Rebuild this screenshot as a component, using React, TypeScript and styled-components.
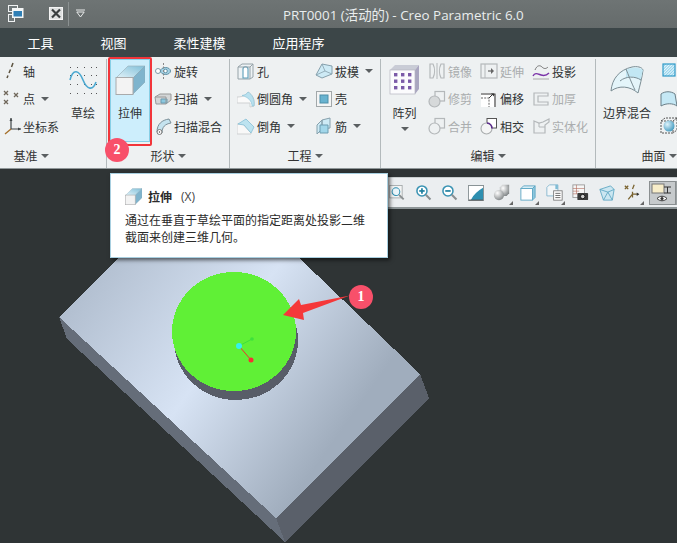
import React from 'react'
import styled, { createGlobalStyle } from 'styled-components'

const Global = createGlobalStyle`
  html, body { margin: 0; padding: 0; background: #2f3435; }
  body { font-family: "Noto Sans CJK SC", "Noto Sans", sans-serif; }
`

const Page = styled.div`
  position: relative;
  width: 677px;
  height: 543px;
  overflow: hidden;
  display: flex;
  flex-direction: column;
`
const TitleBar = styled.div`
  height: 28px;
  display: flex;
  align-items: center;
  background: linear-gradient(#6e7474, #656b6b);
  color: #e9eded;
`
const QuickIcon = styled.span<{ $left: number }>`
  display: flex;
  margin-left: ${p => p.$left}px;
`
const QuickDivider = styled.span`
  width: 1px;
  height: 24px;
  margin-left: 5px;
  background: #8b9191;
`
const Title = styled.span`
  margin-left: 198px;
  font-family: "Open Sans", "Noto Sans CJK SC", sans-serif;
  font-size: 13.4px;
  white-space: nowrap;
`
const TabBar = styled.div`
  height: 29px;
  display: flex;
  align-items: center;
  padding-left: 4px;
  background: #3c4648;
`
const Tab = styled.span`
  padding: 0 23.5px;
  font-size: 13px;
  color: #fff;
`
const Ribbon = styled.div`
  height: 110px;
  padding-top: 2px;
  display: flex;
  background: #eef1f2;
  border-bottom: 1px solid #8f9799;
`
const Group = styled.section<{ $width: number; $shift?: number; $last?: boolean }>`
  flex: none;
  box-sizing: border-box;
  width: ${p => p.$width}px;
  margin-left: ${p => p.$shift ?? 0}px;
  display: flex;
  flex-direction: column;
  border-right: ${p => (p.$last ? 'none' : '1px solid #b3babc')};
`
const GroupBody = styled.div<{ $pad?: number }>`
  height: 87px;
  display: flex;
  padding-left: ${p => p.$pad ?? 0}px;
`
const GroupLabel = styled.div`
  flex: 1;
  display: flex;
  align-items: center;
  justify-content: center;
  font-size: 12px;
  color: #333;
  padding-bottom: 2px;
`
const Column = styled.div<{ $width: number; $left?: number }>`
  width: ${p => p.$width}px;
  margin-left: ${p => p.$left ?? 0}px;
  flex: none;
`
const Row = styled.div<{ $off?: boolean }>`
  box-sizing: border-box;
  height: 27.5px;
  padding-bottom: 2px;
  display: flex;
  align-items: center;
  font-size: 12px;
  white-space: nowrap;
  color: ${p => (p.$off ? '#aaadae' : '#303334')};
`
const RowIcon = styled.span`
  flex: none;
  width: 18px;
  height: 18px;
  margin-right: 2px;
  display: flex;
`
const Caret = styled.i<{ $gap?: number }>`
  flex: none;
  margin-left: ${p => p.$gap ?? 6}px;
  border-left: 4px solid transparent;
  border-right: 4px solid transparent;
  border-top: 4px solid #5a5f61;
`
const Big = styled.div<{ $width: number }>`
  position: relative;
  flex: none;
  box-sizing: border-box;
  width: ${p => p.$width}px;
  display: flex;
  flex-direction: column;
  align-items: center;
  padding-top: 6px;
  font-size: 12px;
  color: #303334;
  white-space: nowrap;
`
const BigIcon = styled.span`
  height: 30px;
  margin-bottom: 9px;
  display: flex;
  align-items: center;
`
const BigCaret = styled(Caret)`
  margin: 6px 0 0;
`
const ExtrudeButton = styled(Big)`
  height: 83px;
  margin: 0 4px 0 3px;
  padding-top: 5px;
  background: #cdeefc;
  border: 1px solid #86cfe6;
`
const RedFrame = styled.div`
  position: absolute;
  left: -3px;
  top: -3px;
  width: 40px;
  height: 85px;
  border: 2px solid #f2353a;
  border-radius: 2px;
`
const Badge = styled.div`
  position: absolute;
  width: 24px;
  height: 24px;
  border-radius: 50%;
  background: #f8506a;
  color: #fff;
  font: bold 14px/24px "Liberation Serif", serif;
  text-align: center;
`
const RibbonBadge = styled(Badge)`
  left: -6px;
  top: 78px;
`
const CanvasBadge = styled(Badge)`
  left: 349px;
  top: 116px;
`
const Canvas = styled.div`
  position: relative;
  flex: 1;
  background: #2f3435;
`
const ViewBar = styled.div`
  position: absolute;
  left: 384px;
  right: 0;
  top: 8px;
  height: 32px;
  display: flex;
  align-items: center;
  background: #ebeef0;
  border-top: 1px solid #c9cecf;
  border-bottom: 2px solid #8d9597;
  box-sizing: border-box;
`
const ViewIcon = styled.span<{ $menu?: boolean; $active?: boolean }>`
  position: relative;
  flex: none;
  width: ${p => (p.$active ? 27 : 26.2)}px;
  height: 24px;
  margin-left: ${p => (p.$active ? 3 : 0)}px;
  display: flex;
  align-items: center;
  justify-content: center;
  box-sizing: border-box;
  ${p => p.$active && 'background: #c6cacc; border: 1px solid #8a8f91;'}
  ${p =>
    p.$menu &&
    `&::after { content: ''; position: absolute; right: 2px; bottom: 0;
      border-left: 4px solid transparent; border-bottom: 4px solid #666; }`}
`
const ViewEdge = styled.span`
  flex: none;
  width: 2px;
  height: 24px;
  background: #9aa0a2;
`
const Tooltip = styled.div`
  position: absolute;
  left: 110px;
  top: 173px;
  width: 278px;
  height: 85px;
  box-sizing: border-box;
  padding: 12px 14px 0;
  background: #fff;
  border: 1px solid #a8cfe0;
  box-shadow: 2px 2px 4px rgba(0, 0, 0, 0.6);
`
const TipHead = styled.div`
  display: flex;
  align-items: center;
  height: 20px;
  margin-bottom: 5px;
  font-size: 12px;
  color: #2b2b2b;
`
const TipName = styled.b`
  margin: 0 9px 0 6px;
`
const TipKey = styled.span`
  font-family: "Open Sans", sans-serif;
  color: #444;
`
const TipText = styled.p`
  margin: 0;
  width: 245px;
  font-size: 12px;
  line-height: 17px;
  color: #2b2b2b;
`
const ModelSvg = styled.svg`
  display: block;
`

const S = (p: { size?: number; box?: number; children: React.ReactNode }) => (
  <svg width={p.size ?? 18} height={p.size ?? 18} viewBox={`0 0 ${p.box ?? 18} ${p.box ?? 18}`}>
    {p.children}
  </svg>
)

const off = { fill: '#eef1f2', stroke: '#b4b8ba', strokeWidth: 1.2 }

const Cube = ({ size = 30, id = 'cubeTop' }: { size?: number; id?: string }) => (
  <svg width={size} height={size} viewBox="0 0 30 30">
    <defs>
      <linearGradient id={id} x1="0" y1="1" x2="1" y2="0">
        <stop offset="0" stopColor="#e4f3f9" />
        <stop offset="1" stopColor="#7fbfd8" />
      </linearGradient>
    </defs>
    <polygon points="1,13 13,1 30,1 18,13" fill={`url(#${id})`} stroke="#9db4bf" strokeWidth=".7" />
    <polygon points="18,13 30,1 30,17 18,29" fill="#7fb4cd" stroke="#8aa9b8" strokeWidth=".7" />
    <rect x="1" y="12.5" width="17" height="17" fill="#f3f3f3" stroke="#a9aaab" />
  </svg>
)

const icons: Record<string, React.ReactNode> = {
  axis: (
    <S>
      <path d="M10 1 L8.500 5 M7.500 7.500 L6 11 M5 13.500 L4 16" fill="none" stroke="#5c5340" strokeWidth="1.500" />
    </S>
  ),
  point: (
    <S>
      <path d="M1 1l4 4M5 1L1 5M11 3l4 4M15 3l-4 4M1 10l4 4M5 10l-4 4" stroke="#6f675a" strokeWidth="1.300" />
    </S>
  ),
  csys: (
    <S>
      <path d="M8 1v11h10" fill="none" stroke="#3f4547" strokeWidth="1.200" />
      <path d="M8 12L2 17" stroke="#a5702c" strokeWidth="1.400" />
      <path d="M6.500 4l1.500-3 1.500 3zM15 10.500l3 1.500-3 1.500z" fill="#3f4547" />
    </S>
  ),
  revolve: (
    <S>
      <circle cx="4" cy="9" r="2.500" fill="#fff" stroke="#7f9aa6" />
      <ellipse cx="11.500" cy="9" rx="5" ry="3.500" fill="#a6d3e6" stroke="#5f8fa3" />
      <circle cx="11.500" cy="9" r="1.800" fill="#fff" stroke="#5f8fa3" />
      <path d="M9.500 1v16" stroke="#888" strokeDasharray="2 1.500" />
    </S>
  ),
  sweep: (
    <S>
      <path d="M1 7l5-3h11v6l-5 4H2z" fill="#d3d6d7" stroke="#999" />
      <path d="M7 9h6v4H7z" fill="#8cc8df" stroke="#6a9bb0" />
      <path d="M1 7h11v7" fill="none" stroke="#999" />
    </S>
  ),
  sblend: (
    <S>
      <path d="M3 15C3 7 8 3 15 2l2 4C11 7 8 10 8 16z" fill="#c5e3ef" stroke="#7b8f98" />
      <circle cx="5.500" cy="15" r="2.500" fill="#fff" stroke="#777" />
      <circle cx="5.500" cy="15" r=".7" fill="#444" />
    </S>
  ),
  hole: (
    <S>
      <path d="M1 5l4-3h11v13l-3 2H1z" fill="#eef3f5" stroke="#96a3a9" />
      <path d="M6 16V7c0-3 5-3 5 0v9z" fill="#fff" stroke="#5c9db8" strokeWidth="1.100" />
      <path d="M13 5v12M1 5h12l3-3" fill="none" stroke="#96a3a9" />
    </S>
  ),
  round: (
    <S>
      <path d="M0 7c6 0 10-2 11-5 5 3 7 8 6 14l-4 1V13H0z" fill="#fafafa" stroke="#cfd2d3" />
      <path d="M5 5.500c3-.5 5-1.500 6-3.500 4 2 7 8 6 14h-2C15 11 11 7 5 5.500z" fill="#b9e1ef" stroke="#86bfd5" strokeWidth=".6" />
    </S>
  ),
  chamfer: (
    <S>
      <path d="M0 7h6l8 9v1H0z" fill="#f8f8f8" stroke="#cfd2d3" />
      <path d="M1 7l8-5 8 8-3 6-7-8z" fill="#bde3f0" stroke="#86bfd5" strokeWidth=".8" />
    </S>
  ),
  draft: (
    <S>
      <path d="M1 13L7 2l10 2v8L7 16z" fill="#cdeaf5" stroke="#86a0ac" />
      <path d="M7 2l3 7-9 4M10 9l7 3" fill="none" stroke="#86a0ac" strokeWidth=".8" />
    </S>
  ),
  shell: (
    <S>
      <rect x="1.500" y="1.500" width="15" height="15" fill="#f4f5f5" stroke="#a2a8aa" />
      <rect x="5" y="5" width="8" height="8" fill="#68b3d0" stroke="#4d8fa9" />
    </S>
  ),
  rib: (
    <S>
      <path d="M2 8l5-5v9l-5 5zM7 3l8-2v10l-8 1z" fill="#cdeaf5" stroke="#86a0ac" />
      <path d="M5 8h8v8H5z" fill="#a2d7ea" stroke="#6d9db1" />
    </S>
  ),
  mirror: (
    <S>
      <path d="M2 2h3c2 4 2 10 0 14H2zM16 2h-3c-2 4-2 10 0 14h3z" {...off} />
      <path d="M9 1v16" stroke="#b4b8ba" />
    </S>
  ),
  trim: (
    <S>
      <rect x="7" y="1.500" width="9.500" height="9.500" {...off} />
      <circle cx="6.500" cy="11.500" r="5.500" fill="#d6d9da" stroke="#b4b8ba" strokeWidth="1.200" />
    </S>
  ),
  merge: (
    <S>
      <rect x="7" y="1.500" width="9.500" height="9.500" {...off} />
      <circle cx="6.500" cy="11.500" r="5.500" {...off} />
    </S>
  ),
  extend: (
    <S>
      <rect x="1" y="2" width="16" height="14" {...off} />
      <path d="M5 2v14" stroke="#b4b8ba" />
      <path d="M8 9h4" stroke="#777" strokeWidth="1.400" />
      <path d="M11 6l3 3-3 3z" fill="#666" />
    </S>
  ),
  offset: (
    <S>
      <path d="M1 3h15v14H1z" fill="#fff" stroke="none" />
      <path d="M1 4h14v13" fill="none" stroke="#333" strokeWidth="1.100" />
      <path d="M1 8h8v9" fill="none" stroke="#666" strokeDasharray="2 1.200" />
      <path d="M9 8l4-4" stroke="#333" />
      <path d="M11 3.500h3v3z" fill="#333" />
    </S>
  ),
  intersect: (
    <S>
      <rect x="7" y="1.500" width="9.500" height="9.500" fill="#fff" stroke="#555" />
      <circle cx="6.500" cy="11.500" r="5.500" fill="#f4f5f5" stroke="#a9adae" strokeWidth="1.100" />
      <path d="M7 6a5.500 5.500 0 0 1 5 5.500" fill="none" stroke="#5a2a8c" strokeWidth="1.700" />
    </S>
  ),
  project: (
    <S>
      <path d="M1 14c2-4 5-2 8-1s5 1 8-2" fill="none" stroke="#7a32a8" strokeWidth="1.400" />
      <path d="M3 8c2-5 5-5 7-3s4 2 6 0" fill="none" stroke="#777" />
      <path d="M1 17h16" stroke="#aaa" />
    </S>
  ),
  thicken: (
    <S>
      <path d="M2 3h14v3H6v6h10v3H2z" {...off} />
    </S>
  ),
  solidify: (
    <S>
      <path d="M2 4l5 2 4-1 6-3v3l-4 3v8H2z" {...off} />
      <path d="M7 6v4h6" fill="none" stroke="#b4b8ba" />
    </S>
  ),
  hatch: (
    <S>
      <defs>
        <pattern id="hatch" width="2" height="2" patternUnits="userSpaceOnUse" patternTransform="rotate(45)">
          <rect width="2" height="2" fill="#8ed0ea" />
          <rect width="1" height="2" fill="#e9f7fc" />
        </pattern>
      </defs>
      <rect x="3" y="2" width="12" height="12" fill="url(#hatch)" stroke="#2f9ac8" strokeWidth="1.200" />
    </S>
  ),
  surface: (
    <S>
      <path d="M1 4c4-3 10-3 14 0l2 12c-4-3-11-3-16 0z" fill="#c5e8f5" stroke="#6b7f88" />
    </S>
  ),
  sphere: (
    <S>
      <defs>
        <radialGradient id="ball" cx=".35" cy=".35" r=".8">
          <stop offset="0" stopColor="#dff3fb" />
          <stop offset="1" stopColor="#2f8fb8" />
        </radialGradient>
      </defs>
      <rect x="1" y="4" width="12" height="12" fill="none" stroke="#555" strokeDasharray="2 1" />
      <path d="M1 4l4-3h12v12l-4 3M13 4l4-3" fill="none" stroke="#555" strokeDasharray="2 1" />
      <circle cx="9" cy="9" r="5.500" fill="url(#ball)" />
    </S>
  ),
}

const Sketch = () => (
  <svg width="28" height="28" viewBox="0 0 28 28">
    {[1, 8, 15, 22, 27].flatMap(x =>
      [1, 9, 18, 27].map(y => <rect key={`${x}-${y}`} x={x} y={y} width="1" height="1" fill="#555" />)
    )}
    <path d="M1 14C4 2 10 4 14 14s10 11 13 2" fill="none" stroke="#4ba8d0" strokeWidth="1.600" />
  </svg>
)

const PatternIcon = () => (
  <svg width="31" height="31" viewBox="0 0 31 31">
    <polygon points="1,6 6,1 30,1 26,6" fill="#c9ccd6" />
    <polygon points="26,6 30,1 30,25 26,30" fill="#a9a6c0" />
    <rect x="1" y="6" width="25" height="24" fill="#fbfbfd" stroke="#b5b6c0" strokeWidth=".7" />
    {[10, 16.5, 23].flatMap(y =>
      [5, 12, 19].map(x => <rect key={`${x}-${y}`} x={x} y={y - 1} width="3.400" height="3.400" fill="#7b5aa8" />)
    )}
  </svg>
)

const BlendIcon = () => (
  <svg width="34" height="28" viewBox="0 0 34 28">
    <path d="M1 25C2 13 9 4 22 1c5-1 10 0 11 3-1 8-3 15-5 23C20 20 9 19 1 25z" fill="#e4f5fa" stroke="#7b8d94" />
    <path d="M16 4c6-3 13-3 17 0-1 4-2 7-2 10-6-4-11-4-15-2z" fill="#c2e7f3" />
    <path d="M16 3c2 5 6 15 9 21M10 15C16 10 25 10 31 14" fill="none" stroke="#7b8d94" />
  </svg>
)

const WindowIcon = () => (
  <svg width="16" height="17" viewBox="0 0 16 17">
    <rect x=".5" y=".5" width="9" height="6" fill="#70787a" stroke="#f0f2f2" />
    <rect x=".5" y="9.500" width="6" height="7" fill="#70787a" stroke="#f0f2f2" />
    <rect x="4" y="3" width="11.500" height="10" fill="#f4f6f6" />
    <rect x="5.500" y="6" width="8.500" height="5.500" fill="#2f7fb5" />
  </svg>
)

const CloseIcon = () => (
  <svg width="14" height="13" viewBox="0 0 14 13">
    <rect x=".5" y=".5" width="13" height="12" fill="#dfe1e1" stroke="#f4f4f4" />
    <path d="M3 2.500l8 8M11 2.500l-8 8" stroke="#3a3f40" strokeWidth="2.200" />
  </svg>
)

const DropIcon = () => (
  <svg width="9" height="9" viewBox="0 0 9 9">
    <path d="M0 1h9" stroke="#e8eaea" />
    <path d="M.8 3h7.400L4.500 8z" fill="none" stroke="#e8eaea" />
  </svg>
)

const Glass = ({ sign }: { sign: '+' | '-' }) => (
  <svg width="17" height="17" viewBox="0 0 22 22">
    <circle cx="9" cy="9" r="6.500" fill="#fff" stroke="#3a93b3" strokeWidth="2" />
    <path d="M14 14l6 6" stroke="#8a8f91" strokeWidth="2.600" />
    <path d="M5.500 9h7" stroke="#1f7f9f" strokeWidth="2.200" />
    {sign === '+' && <path d="M9 5.500v7" stroke="#1f7f9f" strokeWidth="2.200" />}
  </svg>
)

const ViewIcons: { key: string; menu?: boolean; active?: boolean; node: React.ReactNode }[] = [
  {
    key: 'fit',
    node: (
      <svg width="17" height="17" viewBox="0 0 22 22">
        <rect x="1" y="2" width="16" height="16" fill="#f4f5f5" stroke="#9aa0a2" />
        <circle cx="9" cy="10" r="5" fill="#eaf5fa" stroke="#2f8fb0" strokeWidth="1.300" />
        <path d="M13 14l6 6" stroke="#8a8f91" strokeWidth="2.400" />
      </svg>
    ),
  },
  { key: 'in', node: <Glass sign="+" /> },
  { key: 'out', node: <Glass sign="-" /> },
  {
    key: 'repaint',
    node: (
      <svg width="16" height="16" viewBox="0 0 17 17">
        <rect x=".5" y=".5" width="16" height="16" fill="#2e8fb0" stroke="#8a9193" />
        <path d="M1 1h15v2C11 6 6 10 3 16H1z" fill="#fff" />
        <path d="M1 16h15" stroke="#555" />
      </svg>
    ),
  },
  {
    key: 'shade',
    menu: true,
    node: (
      <svg width="17" height="17" viewBox="0 0 20 20">
        <defs>
          <radialGradient id="gray" cx=".35" cy=".3" r=".8">
            <stop offset="0" stopColor="#fff" />
            <stop offset="1" stopColor="#7a7f81" />
          </radialGradient>
        </defs>
        <path d="M8 4l3-3h8v10l-3 3H8z" fill="url(#gray)" />
        <circle cx="7" cy="13" r="6" fill="url(#gray)" />
      </svg>
    ),
  },
  {
    key: 'cube',
    menu: true,
    node: (
      <svg width="16" height="16" viewBox="0 0 18 18">
        <path d="M1 4l3-3h13l-3 3z" fill="#d8eef6" stroke="#5ba6c4" />
        <path d="M14 4l3-3v13l-3 3z" fill="#8ec7dd" stroke="#5ba6c4" />
        <rect x="1" y="4" width="13" height="13" fill="#fff" stroke="#5ba6c4" />
      </svg>
    ),
  },
  {
    key: 'saved',
    menu: true,
    node: (
      <svg width="17" height="17" viewBox="0 0 20 20">
        <path d="M1 4l3-3h10v13H1z" fill="#f2f6f8" stroke="#7fb4cc" />
        <path d="M11 1h3v5h-3z" fill="#7fbcd5" />
        <rect x="9" y="8" width="10" height="11" fill="#fff" stroke="#777" />
        <path d="M11 11h6M11 13.500h6M11 16h6" stroke="#555" />
      </svg>
    ),
  },
  {
    key: 'camera',
    node: (
      <svg width="17" height="17" viewBox="0 0 19 19">
        <rect x="1" y="1" width="13" height="14" fill="#f6f6f6" stroke="#999" />
        <path d="M1 5h13M1 8h7M1 11h5M5 1v10" stroke="#b36c5e" strokeWidth=".7" />
        <rect x="6" y="10" width="12" height="8" rx="1" fill="#3a3a3a" />
        <circle cx="12" cy="14" r="2.500" fill="#cfcfcf" stroke="#111" />
      </svg>
    ),
  },
  {
    key: 'wire',
    node: (
      <svg width="16" height="16" viewBox="0 0 18 18">
        <path d="M1 5l12-4 4 4-2 12H5z" fill="#cbe6f1" stroke="#5fa7c3" />
        <path d="M1 5l9 3 7-3M10 8l5 9M10 8L5 17" fill="none" stroke="#5fa7c3" />
      </svg>
    ),
  },
  {
    key: 'datum',
    menu: true,
    node: (
      <svg width="17" height="17" viewBox="0 0 20 20">
        <path d="M1 2l4 4M5 2L1 6M12 1l-2 5M10 9v7M10 12h7M10 12l-5 6" fill="none" stroke="#7a632f" strokeWidth="1.500" />
        <path d="M15 10l3 2-3 2z" fill="#333" />
      </svg>
    ),
  },
  {
    key: 'display',
    active: true,
    node: (
      <svg width="22" height="20" viewBox="0 0 22 20">
        <rect x="1" y="1" width="12" height="9" fill="#f7edc9" stroke="#777" />
        <path d="M13 4h7M16.500 4v6M13 10h7" fill="none" stroke="#333" />
        <path d="M6 15.500c3-3 7-3 10 0-3 3-7 3-10 0z" fill="#fff" stroke="#333" />
        <circle cx="11" cy="15.500" r="1.600" fill="#333" />
      </svg>
    ),
  },
]

type RowData = { icon: string; label?: string; caret?: boolean; off?: boolean }

const Tools = ({ width, left, rows }: { width: number; left?: number; rows: RowData[] }) => (
  <Column $width={width} $left={left}>
    {rows.map(r => (
      <Row key={r.icon} $off={r.off}>
        <RowIcon>{icons[r.icon]}</RowIcon>
        {r.label}
        {r.caret && <Caret />}
      </Row>
    ))}
  </Column>
)

const Model = () => (
  <ModelSvg width="677" height="374" viewBox="0 169 677 374">
    <defs>
      <linearGradient id="topFace" gradientUnits="userSpaceOnUse" x1="95" y1="270" x2="335" y2="440">
        <stop offset="0" stopColor="#b2bfd0" />
        <stop offset="0.5" stopColor="#d7e3f4" />
        <stop offset="1" stopColor="#a0adbd" />
      </linearGradient>
    </defs>
    <g shapeRendering="crispEdges">
      <polygon points="59,317 276,518 285,542 67,339" fill="#656d79" />
      <polygon points="276,518 420,374 429,398 285,542" fill="#5a606a" />
      <polygon points="59,317 126,250 291,250 420,374 276,518" fill="url(#topFace)" />
      <ellipse cx="236" cy="340.500" rx="62" ry="59.500" fill="#585d68" />
      <ellipse cx="234" cy="331.500" rx="62" ry="59.500" fill="#60f036" />
    </g>
    <path d="M239 346L252 339" stroke="#3ee03c" />
    <path d="M239 346L251 360" stroke="#f03030" />
    <circle cx="252" cy="339" r="1.800" fill="#3ee03c" />
    <circle cx="251" cy="360" r="2.500" fill="#f33333" />
    <circle cx="239" cy="346" r="3" fill="#35f0f0" />
    <polygon points="283,315 299,299 301,305 350,295.500 303,313 304,320" fill="#f5383a" />
  </ModelSvg>
)

export default function App() {
  return (
    <Page>
      <Global />
      <TitleBar>
        <QuickIcon $left={8}><WindowIcon /></QuickIcon>
        <QuickIcon $left={25}><CloseIcon /></QuickIcon>
        <QuickDivider />
        <QuickIcon $left={7}><DropIcon /></QuickIcon>
        <Title>PRT0001 (活动的) - Creo Parametric 6.0</Title>
      </TitleBar>
      <TabBar>
        <Tab>工具</Tab>
        <Tab>视图</Tab>
        <Tab>柔性建模</Tab>
        <Tab>应用程序</Tab>
      </TabBar>
      <Ribbon>
        <Group $width={151} $shift={-44}>
          <GroupBody $pad={47}>
            <Tools
              width={66}
              rows={[
                { icon: 'axis', label: '轴' },
                { icon: 'point', label: '点', caret: true },
                { icon: 'csys', label: '坐标系' },
              ]}
            />
            <Big $width={28}>
              <BigIcon><Sketch /></BigIcon>
              草绘
            </Big>
          </GroupBody>
          <GroupLabel>基准<Caret $gap={3} /></GroupLabel>
        </Group>
        <Group $width={123}>
          <GroupBody>
            <ExtrudeButton $width={40}>
              <BigIcon><Cube /></BigIcon>
              拉伸
              <RedFrame />
              <RibbonBadge>2</RibbonBadge>
            </ExtrudeButton>
            <Tools
              width={70}
              rows={[
                { icon: 'revolve', label: '旋转' },
                { icon: 'sweep', label: '扫描', caret: true },
                { icon: 'sblend', label: '扫描混合' },
              ]}
            />
          </GroupBody>
          <GroupLabel>形状<Caret $gap={3} /></GroupLabel>
        </Group>
        <Group $width={151}>
          <GroupBody $pad={7}>
            <Tools
              width={78}
              rows={[
                { icon: 'hole', label: '孔' },
                { icon: 'round', label: '倒圆角', caret: true },
                { icon: 'chamfer', label: '倒角', caret: true },
              ]}
            />
            <Tools
              width={62}
              rows={[
                { icon: 'draft', label: '拔模', caret: true },
                { icon: 'shell', label: '壳' },
                { icon: 'rib', label: '筋', caret: true },
              ]}
            />
          </GroupBody>
          <GroupLabel>工程<Caret $gap={3} /></GroupLabel>
        </Group>
        <Group $width={215}>
          <GroupBody>
            <Big $width={47}>
              <BigIcon><PatternIcon /></BigIcon>
              阵列
              <BigCaret />
            </Big>
            <Tools
              width={52}
              rows={[
                { icon: 'mirror', label: '镜像', off: true },
                { icon: 'trim', label: '修剪', off: true },
                { icon: 'merge', label: '合并', off: true },
              ]}
            />
            <Tools
              width={52}
              rows={[
                { icon: 'extend', label: '延伸', off: true },
                { icon: 'offset', label: '偏移' },
                { icon: 'intersect', label: '相交' },
              ]}
            />
            <Tools
              width={60}
              rows={[
                { icon: 'project', label: '投影' },
                { icon: 'thicken', label: '加厚', off: true },
                { icon: 'solidify', label: '实体化', off: true },
              ]}
            />
          </GroupBody>
          <GroupLabel>编辑<Caret $gap={3} /></GroupLabel>
        </Group>
        <Group $width={126} $last>
          <GroupBody $pad={6}>
            <Big $width={50}>
              <BigIcon><BlendIcon /></BigIcon>
              边界混合
            </Big>
            <Tools width={30} left={8} rows={[{ icon: 'hatch' }, { icon: 'surface' }, { icon: 'sphere' }]} />
          </GroupBody>
          <GroupLabel>曲面<Caret $gap={3} /></GroupLabel>
        </Group>
      </Ribbon>
      <Canvas>
        <Model />
        <ViewBar>
          {ViewIcons.map(v => (
            <ViewIcon key={v.key} $menu={v.menu} $active={v.active}>
              {v.node}
            </ViewIcon>
          ))}
          <ViewEdge />
        </ViewBar>
        <CanvasBadge>1</CanvasBadge>
      </Canvas>
      <Tooltip>
        <TipHead>
          <Cube size={17} id="tipCubeTop" />
          <TipName>拉伸</TipName>
          <TipKey>(X)</TipKey>
        </TipHead>
        <TipText>通过在垂直于草绘平面的指定距离处投影二维截面来创建三维几何。</TipText>
      </Tooltip>
    </Page>
  )
}
